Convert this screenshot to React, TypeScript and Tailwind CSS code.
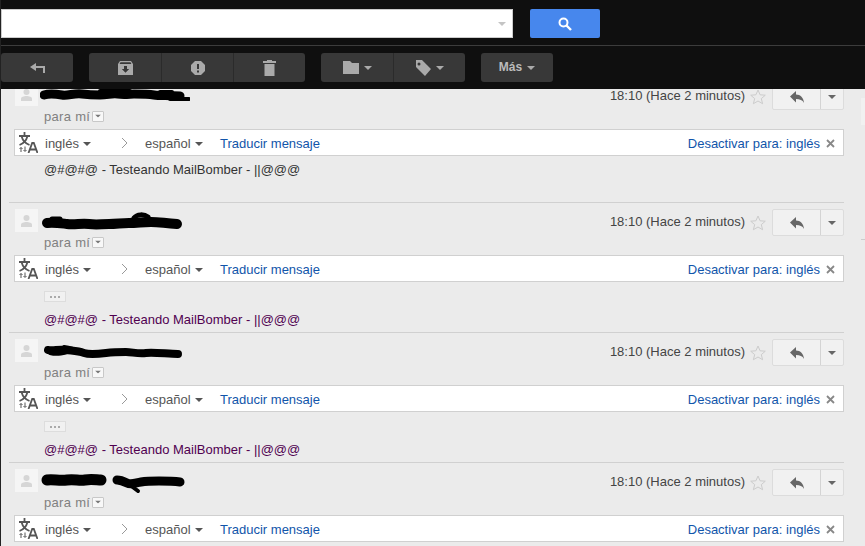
import React from "react";

const Caret = ({ className }: { className: string }) => (
  <svg width="8" height="4" viewBox="0 0 8 4" className={className}>
    <path d="M0 0h8L4 4z" fill="currentColor" />
  </svg>
);

const BackIcon = () => (
  <svg width="15" height="10" viewBox="0 0 15 10" className="text-[#aaaaaa]">
    <path d="M6 0v3h9v7h-2V5H6v3L0 4z" fill="currentColor" />
  </svg>
);

const ArchiveIcon = () => (
  <svg width="15" height="14" viewBox="0 0 15 14" className="text-[#aaaaaa]">
    <path
      fillRule="evenodd"
      d="M2 0h11l2 3v11H0V3zM2.5 1.3 1.6 3h11.8l-.9-1.700zM6 5v3H3.800l3.700 3.700L11.200 8H9V5z"
      fill="currentColor"
    />
  </svg>
);

const SpamIcon = () => (
  <svg width="14" height="14" viewBox="0 0 14 14" className="text-[#aaaaaa]">
    <path
      fillRule="evenodd"
      d="M4 0h6l4 4v6l-4 4H4l-4-4V4zM6 3v5h2V3zM6 9.500v2h2v-2z"
      fill="currentColor"
    />
  </svg>
);

const TrashIcon = () => (
  <svg width="13" height="16" viewBox="0 0 13 16" className="text-[#aaaaaa]">
    <path d="M4 0h5v1h4v2H0V1h4zM1.500 4h10v12h-10z" fill="currentColor" />
  </svg>
);

const FolderIcon = () => (
  <svg width="16" height="13" viewBox="0 0 16 13" className="text-[#aaaaaa]">
    <path d="M0 0h7l2 2h7v11H0z" fill="currentColor" />
  </svg>
);

const TagIcon = () => (
  <svg width="16" height="16" viewBox="0 0 16 16" className="text-[#aaaaaa]">
    <path
      fillRule="evenodd"
      d="M1 0h6l9 9-6 7-9-9zM4 2.500a1.500 1.500 0 1 0 0 3 1.500 1.500 0 0 0 0-3z"
      fill="currentColor"
    />
  </svg>
);

const ReplyIcon = () => (
  <svg width="14" height="12" viewBox="0 0 14 12" className="text-[#666666]">
    <path d="M6 0v3.500c4.500 0 7.500 3 8 8.500-1.500-3-4-4-8-4v3.500L0 5.500z" fill="currentColor" />
  </svg>
);

const TranslateIcon = () => (
  <svg width="20" height="21" viewBox="0 0 20 21" className="text-[#555555]">
    <g fill="none" stroke="currentColor">
      <path strokeWidth="1.800" d="M1 4h11M6.500 0v4M3.500 4c1 4 4 7.500 8 9M9.500 4c-1 4-4 7.500-8 9" />
      <path strokeWidth="1" d="M3 20v-4.500M1.500 17 3 15.500 4.500 17M7 14.500V19M5.500 18 7 19.500 8.500 18" />
      <path strokeWidth="1.800" d="M10.500 21l3.700-10h1.600l3.700 10M11.800 17.500h6.400" />
    </g>
  </svg>
);

const Person = () => (
  <div className="flex h-[23px] w-[23px] shrink-0 items-center justify-center bg-[#f5f5f5]">
    <svg width="11" height="12" viewBox="0 0 11 12" className="text-[#d6d6d6]">
      <circle cx="5.500" cy="3" r="3" fill="currentColor" />
      <path d="M0 12V9.500C0 8 3 7 5.500 7S11 8 11 9.500V12z" fill="currentColor" />
    </svg>
  </div>
);

// the scribbled-out sender names, blacked out by hand in the picture
const scribbles: { d: string; w: number }[][] = [
  [
    { d: "M4 12c6-2 12-1 18 0s12-2 20-1 10 1 18 1 12-2 18-1 12 0 16 0 14 0 20 1 14 0 26 1", w: 9 },
    { d: "M60 8h30M120 9h12M130 16h19", w: 4 },
  ],
  [
    { d: "M7 14c6-1 12 0 20 1s14-1 22 0 12 0 20 0 12-1 20-1 14-1 22-1 12 1 26 2", w: 10 },
    { d: "M94 9c3-4 10-4 14-1M12 10h8", w: 5 },
  ],
  [
    { d: "M8 11c6 1 10-1 18 0s12 1 18 3 14 1 22 0 14-1 20-1 12 2 20 1 22 1 32 1", w: 8 },
    { d: "M10 14c8 2 14 0 20-2M24 8c6 1 10 2 14 4", w: 4 },
  ],
  [
    { d: "M7 11c6-1 12 1 20 0s12 1 18 0 12 0 16 0", w: 11 },
    { d: "M77 11c4 0 6 1 10 3s8 0 14-1 12-1 18-1 14 0 21 1", w: 9 },
    { d: "M90 16l8 6", w: 4 },
  ],
];

const Scribble = ({ index }: { index: number }) => (
  <svg width="150" height="27" viewBox="0 0 150 27" className="shrink-0">
    {scribbles[index].map((s) => (
      <path key={s.d} d={s.d} fill="none" stroke="#000000" strokeWidth={s.w} strokeLinecap="round" strokeLinejoin="round" />
    ))}
  </svg>
);

const Message = ({ index }: { index: number }) => {
  const first = index === 0;
  return (
    <div className={`border-t border-[#d0d0d0] ${first ? "h-[126px]" : "h-[130px]"}`}>
      <div className="flex pt-[6px]">
        <div className="ml-[6px] flex h-[23px] items-start gap-[2px]">
          <Person />
          <Scribble index={index} />
        </div>
        <div className="ml-auto flex items-center">
          <span className="pb-[2px] text-[#444444]">18:10 (Hace 2 minutos)</span>
          <svg width="16" height="16" viewBox="0 0 16 16" className="ml-[5px] text-[#cccccc]">
            <path d="M8 1l2.100 4.800 5.200.4-4 3.400 1.300 5.100L8 12l-4.600 2.700 1.300-5.100-4-3.400 5.200-.4z" fill="none" stroke="currentColor" />
          </svg>
          <div className="ml-[6px] flex h-[27px] w-[72px] rounded-[2px] border border-[#dcdcdc] bg-[#f1f1f1]">
            <div className="flex w-[48px] items-center justify-center border-r border-[#d4d4d4]">
              <ReplyIcon />
            </div>
            <div className="flex flex-1 items-center justify-center">
              <Caret className="text-[#666666]" />
            </div>
          </div>
        </div>
      </div>
      <div className="mb-[7px] flex h-[12px] items-center pl-[35px] text-[#808080]">
        <span className="tracking-[0.3px]">para mí</span>
        <span className="ml-[2px] flex h-[11px] w-[12px] items-center justify-center rounded-[1px] border border-[#c8c8c8] bg-[#f8f8f8]">
          <Caret className="scale-75 text-[#777777]" />
        </span>
      </div>
      <div className="ml-[5px] flex h-[27px] items-center border border-[#d0d0d0] bg-white pt-[2px] text-[#1155aa]">
        <div className="-mt-[2px] ml-[3px] w-[27px]">
          <TranslateIcon />
        </div>
        <span className="flex w-[76px] items-center gap-[4px] text-[#555555]">
          inglés
          <Caret className="text-[#555555]" />
        </span>
        <span className="-mt-[2px] w-[24px]">
          <svg width="7" height="12" viewBox="0 0 7 12" className="text-[#999999]">
            <path d="M1 1l5 5-5 5" fill="none" stroke="currentColor" />
          </svg>
        </span>
        <span className="flex w-[75px] items-center gap-[4px] text-[#555555]">
          español
          <Caret className="text-[#555555]" />
        </span>
        <span>Traducir mensaje</span>
        <span className="ml-auto">Desactivar para: inglés</span>
        <svg width="9" height="9" viewBox="0 0 9 9" className="mr-[8px] ml-[6px] text-[#888888]">
          <path d="M1 1l7 7M8 1L1 8" fill="none" stroke="currentColor" strokeWidth="1.800" />
        </svg>
      </div>
      {first && <p className="mt-[6px] pl-[35px] text-[#333333]">@#@#@ - Testeando MailBomber - ||@@@</p>}
      {!first && index < 3 && (
        <>
          <div className="mt-[9px] ml-[35px] flex h-[11px] w-[22px] items-center justify-center gap-[2px] border border-[#dddddd] bg-[#f1f1f1]">
            <i className="h-[2px] w-[2px] bg-[#aaaaaa]" />
            <i className="h-[2px] w-[2px] bg-[#aaaaaa]" />
            <i className="h-[2px] w-[2px] bg-[#aaaaaa]" />
          </div>
          <p className="mt-[10px] pl-[35px] text-[#500050]">@#@#@ - Testeando MailBomber - ||@@@</p>
        </>
      )}
    </div>
  );
};

const toolBtn = "flex h-[29px] items-center justify-center gap-[5px] bg-[#383838]";

export default function App() {
  return (
    <main className="flex h-[546px] w-[865px] flex-col overflow-hidden border-l border-[#222222] bg-[#ebebeb] font-['Liberation_Sans',Arial,sans-serif] text-[13px] leading-[15px]">
      <header className="relative z-10 h-[89px] shrink-0 bg-[#0f0f0f] pt-[9px]">
        <div className="flex">
          <div className="flex h-[29px] w-[512px] items-center justify-end border border-[#cccccc] bg-white pr-[6px]">
            <Caret className="text-[#c4c4c4]" />
          </div>
          <button className="ml-[17px] flex h-[29px] w-[70px] items-center justify-center rounded-[2px] bg-[#4787ed]">
            <svg width="14" height="14" viewBox="0 0 14 14">
              <circle cx="5.500" cy="5.500" r="4" fill="none" stroke="#ffffff" strokeWidth="2" />
              <path d="M8.500 8.500 13 13" stroke="#ffffff" strokeWidth="2.400" />
            </svg>
          </button>
        </div>
        <div className="mt-[7px] h-px bg-[#3c3c3c]" />
        <div className="mt-[7px] flex">
          <div className={`${toolBtn} w-[72px] rounded-[3px]`}>
            <BackIcon />
          </div>
          <div className="ml-[16px] flex overflow-hidden rounded-[3px]">
            <div className={`${toolBtn} w-[73px] border-r border-[#2b2b2b]`}>
              <ArchiveIcon />
            </div>
            <div className={`${toolBtn} w-[72px] border-r border-[#2b2b2b]`}>
              <SpamIcon />
            </div>
            <div className={`${toolBtn} w-[71px]`}>
              <TrashIcon />
            </div>
          </div>
          <div className="ml-[16px] flex overflow-hidden rounded-[3px]">
            <div className={`${toolBtn} w-[73px] border-r border-[#2b2b2b]`}>
              <FolderIcon />
              <Caret className="text-[#aaaaaa]" />
            </div>
            <div className={`${toolBtn} w-[71px]`}>
              <TagIcon />
              <Caret className="text-[#aaaaaa]" />
            </div>
          </div>
          <div className={`${toolBtn} ml-[16px] w-[72px] rounded-[3px]`}>
            <span className="text-[12px] font-bold text-[#bbbbbb]">Más</span>
            <Caret className="text-[#aaaaaa]" />
          </div>
        </div>
      </header>
      <div className="-mt-[13px] flex">
        <div className="ml-[8px] w-[835px] shrink-0">
          {[0, 1, 2, 3].map((i) => (
            <Message key={i} index={i} />
          ))}
        </div>
        <aside className="ml-[17px] flex-1 pt-[22px]">
          <div className="h-[27px] bg-[#f1f1f1]" />
          <div className="mt-[114px] h-px bg-[#cccccc]" />
        </aside>
      </div>
    </main>
  );
}
